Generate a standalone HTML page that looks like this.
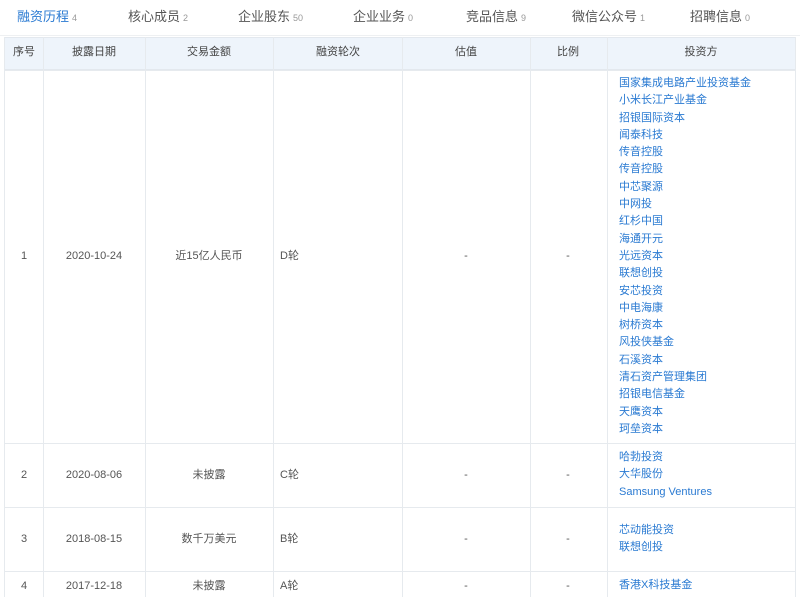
<!DOCTYPE html>
<html><head><meta charset="utf-8"><style>
*{margin:0;padding:0;box-sizing:border-box}
body{width:800px;height:595px;overflow:hidden;background:#fff;font-family:"Liberation Sans","Noto Sans CJK SC",sans-serif;color:#555;font-size:11px;position:relative}
div{line-height:14px}
.t{position:absolute;top:9px;font-size:13px;line-height:16px;color:#555;white-space:nowrap}
.t small{font-size:9px;color:#999;margin-left:3px}
.hdr{position:absolute;left:4px;top:37px;width:792px;height:33px;background:#eef4fb;border:1px solid #e3e8ee}
.v{position:absolute;top:37px;height:560px;width:1px;background:#e6eaee}
.h{position:absolute;left:4px;width:792px;height:1px;background:#e6eaee}
.c{position:absolute;white-space:nowrap;transform:translateX(-50%)}
.hd{top:45px;color:#444}
.l{position:absolute;white-space:nowrap;color:#555}
.inv{position:absolute;left:619px;color:#2a7ad2;line-height:17.3px;font-size:11px;white-space:nowrap}
</style></head><body>
<div class="t" style="left:17px;color:#2a7ad2">融资历程<small>4</small></div>
<div class="t" style="left:128px">核心成员<small>2</small></div>
<div class="t" style="left:238px">企业股东<small>50</small></div>
<div class="t" style="left:353px">企业业务<small>0</small></div>
<div class="t" style="left:466px">竞品信息<small>9</small></div>
<div class="t" style="left:572px">微信公众号<small>1</small></div>
<div class="t" style="left:690px">招聘信息<small>0</small></div>
<div style="position:absolute;left:0;top:35px;width:800px;height:1px;background:#eef0f2"></div>
<div class="hdr"></div>
<div class="v" style="left:4px"></div>
<div class="v" style="left:43px"></div>
<div class="v" style="left:145px"></div>
<div class="v" style="left:273px"></div>
<div class="v" style="left:402px"></div>
<div class="v" style="left:530px"></div>
<div class="v" style="left:607px"></div>
<div class="v" style="left:795px"></div>
<div class="h" style="top:70px"></div>
<div class="h" style="top:443px"></div>
<div class="h" style="top:507px"></div>
<div class="h" style="top:571px"></div>
<div class="c hd" style="left:24px">序号</div>
<div class="c hd" style="left:94px">披露日期</div>
<div class="c hd" style="left:209px">交易金额</div>
<div class="c hd" style="left:338px">融资轮次</div>
<div class="c hd" style="left:466px">估值</div>
<div class="c hd" style="left:568px">比例</div>
<div class="c hd" style="left:701px">投资方</div>

<div class="c" style="left:24px;top:249px">1</div>
<div class="c" style="left:94px;top:249px">2020-10-24</div>
<div class="c" style="left:209px;top:249px">近15亿人民币</div>
<div class="l" style="left:280px;top:249px">D轮</div>
<div class="c" style="left:466px;top:249px">-</div>
<div class="c" style="left:568px;top:249px">-</div>
<div class="inv" style="top:75px">国家集成电路产业投资基金<br>小米长江产业基金<br>招银国际资本<br>闻泰科技<br>传音控股<br>传音控股<br>中芯聚源<br>中网投<br>红杉中国<br>海通开元<br>光远资本<br>联想创投<br>安芯投资<br>中电海康<br>树桥资本<br>风投侠基金<br>石溪资本<br>清石资产管理集团<br>招银电信基金<br>天鹰资本<br>珂垒资本</div>

<div class="c" style="left:24px;top:468px">2</div>
<div class="c" style="left:94px;top:468px">2020-08-06</div>
<div class="c" style="left:209px;top:468px">未披露</div>
<div class="l" style="left:280px;top:468px">C轮</div>
<div class="c" style="left:466px;top:468px">-</div>
<div class="c" style="left:568px;top:468px">-</div>
<div class="inv" style="top:449px">哈勃投资<br>大华股份<br>Samsung Ventures</div>

<div class="c" style="left:24px;top:532px">3</div>
<div class="c" style="left:94px;top:532px">2018-08-15</div>
<div class="c" style="left:209px;top:532px">数千万美元</div>
<div class="l" style="left:280px;top:532px">B轮</div>
<div class="c" style="left:466px;top:532px">-</div>
<div class="c" style="left:568px;top:532px">-</div>
<div class="inv" style="top:522px">芯动能投资<br>联想创投</div>

<div class="c" style="left:24px;top:579px">4</div>
<div class="c" style="left:94px;top:579px">2017-12-18</div>
<div class="c" style="left:209px;top:579px">未披露</div>
<div class="l" style="left:280px;top:579px">A轮</div>
<div class="c" style="left:466px;top:579px">-</div>
<div class="c" style="left:568px;top:579px">-</div>
<div class="inv" style="top:577px">香港X科技基金</div>
</body></html>
